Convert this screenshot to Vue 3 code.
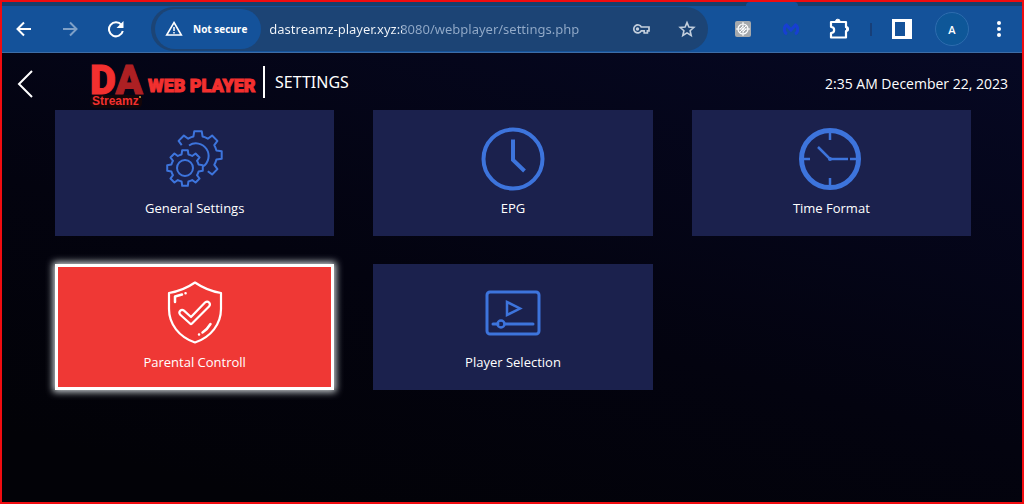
<script setup>
import { ref } from 'vue'

const url = ref('dastreamz-player.xyz:8080/webplayer/settings.php')
const selected = ref('parental')
const cards = [
  { id: 'general', label: 'General Settings' },
  { id: 'epg', label: 'EPG' },
  { id: 'time', label: 'Time Format' },
  { id: 'parental', label: 'Parental Controll' },
  { id: 'player', label: 'Player Selection' },
]

// Outline of a gear whose teeth run clockwise from `first` degrees.
function gear(cx, cy, root, tip, first, teeth, closed) {
  const at = (r, deg) => {
    const a = (deg * Math.PI) / 180
    return `${(cx + r * Math.cos(a)).toFixed(2)} ${(cy + r * Math.sin(a)).toFixed(2)}`
  }
  let d = ''
  for (let i = 0; i < teeth; i++) {
    const a = first + i * 45
    d += i === 0 ? `M${at(root, a - 14)}` : `A${root} ${root} 0 0 1 ${at(root, a - 14)}`
    d += `L${at(tip, a - 9)}L${at(tip, a + 9)}L${at(root, a + 14)}`
  }
  return closed ? `${d}A${root} ${root} 0 0 1 ${at(root, first - 14)}Z` : d
}
const frontGear = gear(22, 41, 14, 18, -90, 8, true)
const backGear = gear(35, 28, 19, 24, -135, 5, false)
</script>

<template>
  <div class="frame">
    <div class="tabstrip"><span class="tab"></span></div>
    <header class="toolbar">
      <nav class="nav">
        <button aria-label="Back"><svg width="18" height="18" viewBox="0 0 18 18"><path d="M16 9H3M9 2.5 2.5 9 9 15.5" /></svg></button>
        <button aria-label="Forward" class="dim"><svg width="18" height="18" viewBox="0 0 18 18"><path d="M2 9h13M9 2.5 15.5 9 9 15.5" /></svg></button>
        <button aria-label="Reload"><svg width="18" height="18" viewBox="0 0 18 18"><path d="M14.5 5A7 7 0 1 0 15.8 11" /><path d="M16.5 1v7h-7z" fill="#fff" stroke="none" /></svg></button>
      </nav>
      <div class="omnibox">
        <button class="chip">
          <svg width="18" height="18" viewBox="0 0 18 18"><path d="M9 2.5 16.3 15H1.7z" stroke-width="1.6" /><path d="M9 7v4M9 12v1.5" stroke-width="1.5" /></svg>
          <span>Not secure</span>
        </button>
        <input v-model="url" class="url" type="text" aria-label="Address" spellcheck="false" />
        <button aria-label="Passwords" class="soft"><svg width="18" height="18" viewBox="0 0 18 18"><path d="M9.3 7H17v3.8h-1.6V13h-3.2v-2.2H9.3A4 4 0 1 1 9.3 7z" stroke-width="1.7" /><circle cx="5.5" cy="9" r="1.7" fill="#c3cfdd" stroke="none" /></svg></button>
        <button aria-label="Bookmark" class="soft star"><svg width="18" height="18" viewBox="0 0 18 18"><path d="m9 2.6 1.9 4.5 4.9.4-3.7 3.2 1.1 4.8L9 12.9l-4.2 2.6 1.1-4.8-3.7-3.2 4.9-.4z" stroke-width="1.6" /></svg></button>
      </div>
      <div class="extensions">
        <button aria-label="Site extension">
          <svg width="16" height="16" viewBox="0 0 16 16"><rect width="16" height="16" rx="2" fill="#a5a9ad" stroke="none" /><circle cx="8" cy="8" r="5" stroke-width="1.2" /><path d="M8 1v14M1 8h14M4.5 11.5l7-7M5 8l3-3M8 11l3-3" stroke-width="1" /></svg>
        </button>
        <button aria-label="Malware protection">
          <svg width="16" height="16" viewBox="0 0 16 16"><path d="M4 13C0 11 1 5 3.500 4L8 9l4.500-5C15 5 16 11 12 13" stroke="#173fd2" stroke-width="3" /></svg>
        </button>
        <button aria-label="Extensions">
          <svg width="22" height="22" viewBox="0 0 22 22"><path d="M3 4h15v5.200a1.900 1.900 0 0 1 0 3.800v6.500H3v-4.500c4.200-.3 4.200-5.800 0-6.200z" stroke-width="2.200" stroke-linejoin="round" /><path d="M7.500 3.500a2.300 2.300 0 0 1 4.600 0M18 8.800a2.300 2.300 0 0 1 0 4.600" fill="#fff" stroke-width="1" /></svg>
        </button>
        <span class="divider"></span>
        <button aria-label="Side panel">
          <svg width="20" height="20" viewBox="0 0 20 20"><path d="M0 0h20v20H0zM3 3v14h10V3z" fill="#fff" fill-rule="evenodd" stroke="none" /></svg>
        </button>
        <button class="avatar" aria-label="Profile">A</button>
        <button aria-label="Menu">
          <svg width="6" height="18" viewBox="0 0 6 18"><g fill="#fff" stroke="none"><circle cx="3" cy="3" r="2" /><circle cx="3" cy="9" r="2" /><circle cx="3" cy="15" r="2" /></g></svg>
        </button>
      </div>
    </header>

    <main class="page">
      <div class="heading">
        <button class="return" aria-label="Go back"><svg width="18" height="28" viewBox="0 0 18 28"><path d="M16 1 3 14l13 13" stroke-width="2" /></svg></button>
        <svg class="logo" width="176" height="54" viewBox="0 0 176 54" role="img" aria-label="DA Streamz Web Player">
          <text x="3" y="39" class="letters">D<tspan class="second">A</tspan></text>
          <rect x="3" y="40" width="52" height="13" rx="5" fill="#140609" />
          <text x="5" y="50" class="streamz">Streamz</text>
          <circle cx="53" cy="42" r="1" fill="#d9a13b" />
          <text x="61" y="37" class="player">WEB PLAYER</text>
        </svg>
        <h1>SETTINGS</h1>
        <time datetime="2023-12-22T02:35">2:35 AM December 22, 2023</time>
      </div>

      <section class="grid">
        <button v-for="card in cards" :key="card.id" class="card" :class="{ active: card.id === selected }" @click="selected = card.id">
          <svg width="64" height="64" viewBox="0 0 64 64">
            <g v-if="card.id === 'general'" stroke-width="2" stroke-linejoin="round">
              <path :d="backGear" />
              <path d="M26 18.500a12.500 12.500 0 1 1 14 21" />
              <path :d="frontGear" fill="#1b214d" />
              <circle cx="22" cy="41" r="8" />
            </g>
            <g v-else-if="card.id === 'epg'">
              <circle cx="32" cy="32" r="29.500" stroke-width="4" />
              <path d="M32 12.500v20.500L43.500 44" stroke-width="4" />
            </g>
            <g v-else-if="card.id === 'time'">
              <circle cx="31" cy="32" r="28.500" stroke-width="5" />
              <path d="M31 6v7M31 51v7M5 32h6M51 32h6M19 20l12 12h18" stroke-width="2.500" />
              <circle cx="31" cy="32" r="2" class="solid" />
            </g>
            <g v-else-if="card.id === 'parental'" stroke-width="2.200" stroke-linecap="round" stroke-linejoin="round">
              <path d="M32 1.500C24 7 15 10.500 6 12v16c0 15 10 28 26 33.500C48 56 58 43 58 28V12C49 10.500 40 7 32 1.500z" />
              <path d="M12 21v-5.500l7-2M22.500 12.200h.1M47.500 43a26 26 0 0 1-8 8.500M36 53.500h.1" stroke-width="2.500" />
              <path d="M17 33.500c-2-3 1.500-6 4-3.800l7 6.300 14-14.500c3-2.500 6.500 1 4 4L29 42.500q-1 1-2 0z" />
            </g>
            <g v-else>
              <rect x="6" y="11" width="52" height="42" rx="3" stroke-width="3" />
              <path d="M26 21v13l13-6.500z" stroke-width="2.500" />
              <path d="M12 43h5M24 43h28" stroke-width="3" stroke-linecap="round" />
              <circle cx="20" cy="43" r="3.500" stroke-width="2.500" />
            </g>
          </svg>
          <span>{{ card.label }}</span>
        </button>
      </section>
    </main>
  </div>
</template>

<style>
body {
  background: #03030f;
}
</style>

<style scoped>
.frame {
  box-sizing: border-box;
  min-height: 100vh;
  display: flex;
  flex-direction: column;
  border: 2px solid #f00c10;
  background: #14529a;
  font-family: "Open Sans", "Noto Sans", sans-serif;
  color: #fff;
}
button {
  padding: 0;
  border: 0;
  background: none;
  color: inherit;
  font: inherit;
  cursor: pointer;
}
svg {
  display: block;
  fill: none;
  stroke: #fff;
  stroke-width: 2;
}
.tabstrip {
  display: flex;
  justify-content: flex-end;
  height: 4px;
  padding-right: 224px;
  background: #173f6c;
}
.tab {
  width: 52px;
  border-radius: 8px 8px 0 0;
  background: #14529a;
}
.toolbar {
  display: flex;
  align-items: center;
  height: 46px;
  padding: 0 20px 0 13px;
  border-bottom: 1px solid #3e6da6;
  border-radius: 8px 8px 0 0;
}
.nav {
  display: flex;
  gap: 28px;
  margin-right: 26px;
}
.dim {
  opacity: 0.45;
}
.omnibox {
  flex: 1;
  display: flex;
  align-items: center;
  box-sizing: border-box;
  height: 44px;
  padding: 0 12px 0 4px;
  border-radius: 22px;
  background: #1c4475;
}
.chip {
  display: flex;
  align-items: center;
  gap: 10px;
  height: 40px;
  padding: 0 14px 0 10px;
  border-radius: 20px;
  background: #14529a;
  font-size: 10px;
  font-weight: 700;
  white-space: nowrap;
}
.url {
  flex: 1;
  min-width: 0;
  margin-left: 8px;
  padding: 0;
  border: 0;
  outline: 0;
  background: linear-gradient(90deg, #f4f7fb 133px, #93abc9 133px);
  background-clip: text;
  color: transparent;
  font: 13px/24px "Noto Sans", "Open Sans", sans-serif;
}
.soft svg {
  stroke: #c3cfdd;
}
.star {
  margin-left: 28px;
}
.extensions {
  display: flex;
  align-items: center;
  gap: 23px;
  margin-left: 27px;
}
.extensions button {
  display: grid;
  place-items: center;
  min-width: 6px;
}
.extensions button:nth-child(2) {
  margin: 0 6px 0 9px;
}
.divider {
  width: 2px;
  height: 13px;
  margin: 0 -3px;
  background: #173f78;
}
.extensions .avatar {
  width: 34px;
  height: 34px;
  margin-right: 4px;
  box-sizing: border-box;
  border: 1px solid #2d6cae;
  border-radius: 50%;
  background: #0e5798;
  font-size: 11px;
  font-weight: 600;
}
.page {
  flex: 1;
  background: linear-gradient(15deg, #020207 10%, #03030f 45%, #060823 100%);
}
.heading {
  display: flex;
  align-items: center;
  height: 57px;
  padding: 0 14px 0 14px;
}
.return {
  margin: 4px 53px 0 0;
}
.logo text {
  fill: #f2302f;
  stroke: #f2302f;
  font-family: Roboto, "Liberation Sans", sans-serif;
  font-weight: 900;
}
.logo rect,
.logo circle {
  stroke: none;
}
.logo .letters {
  font-size: 40px;
  stroke-width: 1;
}
.logo .second {
  fill: #ad2023;
  stroke: #ad2023;
}
.logo .streamz {
  font-family: "Liberation Sans", sans-serif;
  font-size: 12px;
  font-weight: 700;
  stroke: none;
}
.logo .player {
  font-size: 18px;
  stroke-width: 1;
}
h1 {
  margin: 0;
  padding-left: 10px;
  border-left: 2px solid #fff;
  font: 400 16px/32px "Noto Sans", "Open Sans", sans-serif;
}
time {
  margin: 4px 0 0 auto;
  font-size: 14px;
}
.grid {
  display: grid;
  grid-template-columns: repeat(3, 1fr);
  gap: 28px 39px;
  padding: 0 51px 28px 53px;
}
.card {
  display: flex;
  flex-direction: column;
  align-items: center;
  gap: 7px;
  padding: 17px 12px 18px;
  background: #1b214d;
  font-size: 13px;
  line-height: 20px;
}
.card svg {
  stroke: #3d74dc;
}
.solid {
  fill: #3d74dc;
  stroke: none;
}
.card.active {
  background: #ef3835;
  box-shadow: inset 0 0 0 3px #fff, 0 0 7px 2px #cfd5d8;
}
.card.active svg {
  stroke: #fff;
}
</style>
